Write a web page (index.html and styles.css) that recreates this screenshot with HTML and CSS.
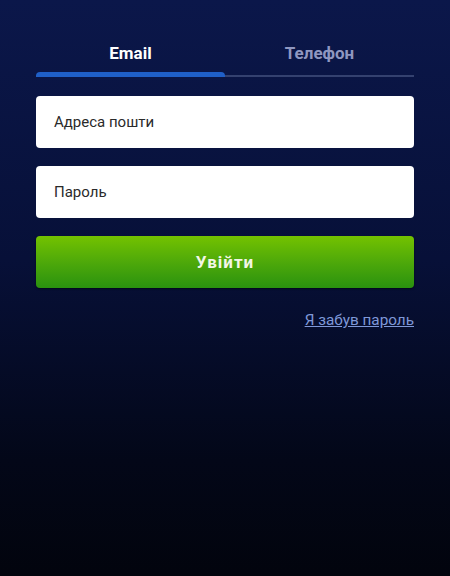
FILE: index.html
```html
<!DOCTYPE html>
<html lang="uk">
<head>
<meta charset="utf-8">
<link rel="stylesheet" href="styles.css">
</head>
<body>
<main class="login">
  <nav class="tabs">
    <div class="tab active">Email</div>
    <div class="tab">Телефон</div>
  </nav>
  <form class="form">
    <div class="field">Адреса пошти</div>
    <div class="field">Пароль</div>
    <button type="button" class="submit">Увійти</button>
    <div class="forgot-row"><a class="forgot" href="#">Я забув пароль</a></div>
  </form>
</main>
</body>
</html>
```
FILE: styles.css
```css
html, body {
  margin: 0;
  height: 100%;
}
body {
  background: linear-gradient(180deg, #0b174a 0%, #071038 45%, #030718 80%, #02040d 100%);
  font-family: Roboto, "Noto Sans", sans-serif;
}
.login {
  padding: 36px 36px 0 36px;
}
.tabs {
  display: flex;
}
.tab {
  flex: 1;
  text-align: center;
  font-size: 17px;
  font-weight: 700;
  color: #8f97c0;
  height: 41px;
  line-height: 34px;
  box-shadow: inset 0 -2px 0 #34416f;
  position: relative;
}
.tab.active {
  color: #ffffff;
}
.tab.active::after {
  content: "";
  position: absolute;
  left: 0;
  right: 0;
  bottom: 0;
  height: 5px;
  border-radius: 4px 4px 0 0;
  background: #1f5fc7;
}
.form {
  display: flex;
  flex-direction: column;
  padding-top: 19px;
}
.field {
  background: #ffffff;
  border-radius: 4px;
  height: 52px;
  line-height: 52px;
  padding: 0 18px;
  font-size: 15px;
  color: #2a2a2a;
  margin-bottom: 18px;
}
.submit {
  height: 52px;
  border: none;
  border-radius: 4px;
  background: linear-gradient(180deg, #74c200 0%, #4ea90a 50%, #2a920f 100%);
  color: #f2f6e6;
  font-family: Roboto, "Noto Sans", sans-serif;
  font-size: 17px;
  font-weight: 700;
  letter-spacing: 1px;
  box-shadow: 0 1px 2px rgba(0,0,0,0.5);
}
.forgot-row {
  text-align: right;
  padding-top: 22px;
}
.forgot {
  color: #7f98d8;
  font-size: 15.3px;
  text-decoration: underline;
}
```
